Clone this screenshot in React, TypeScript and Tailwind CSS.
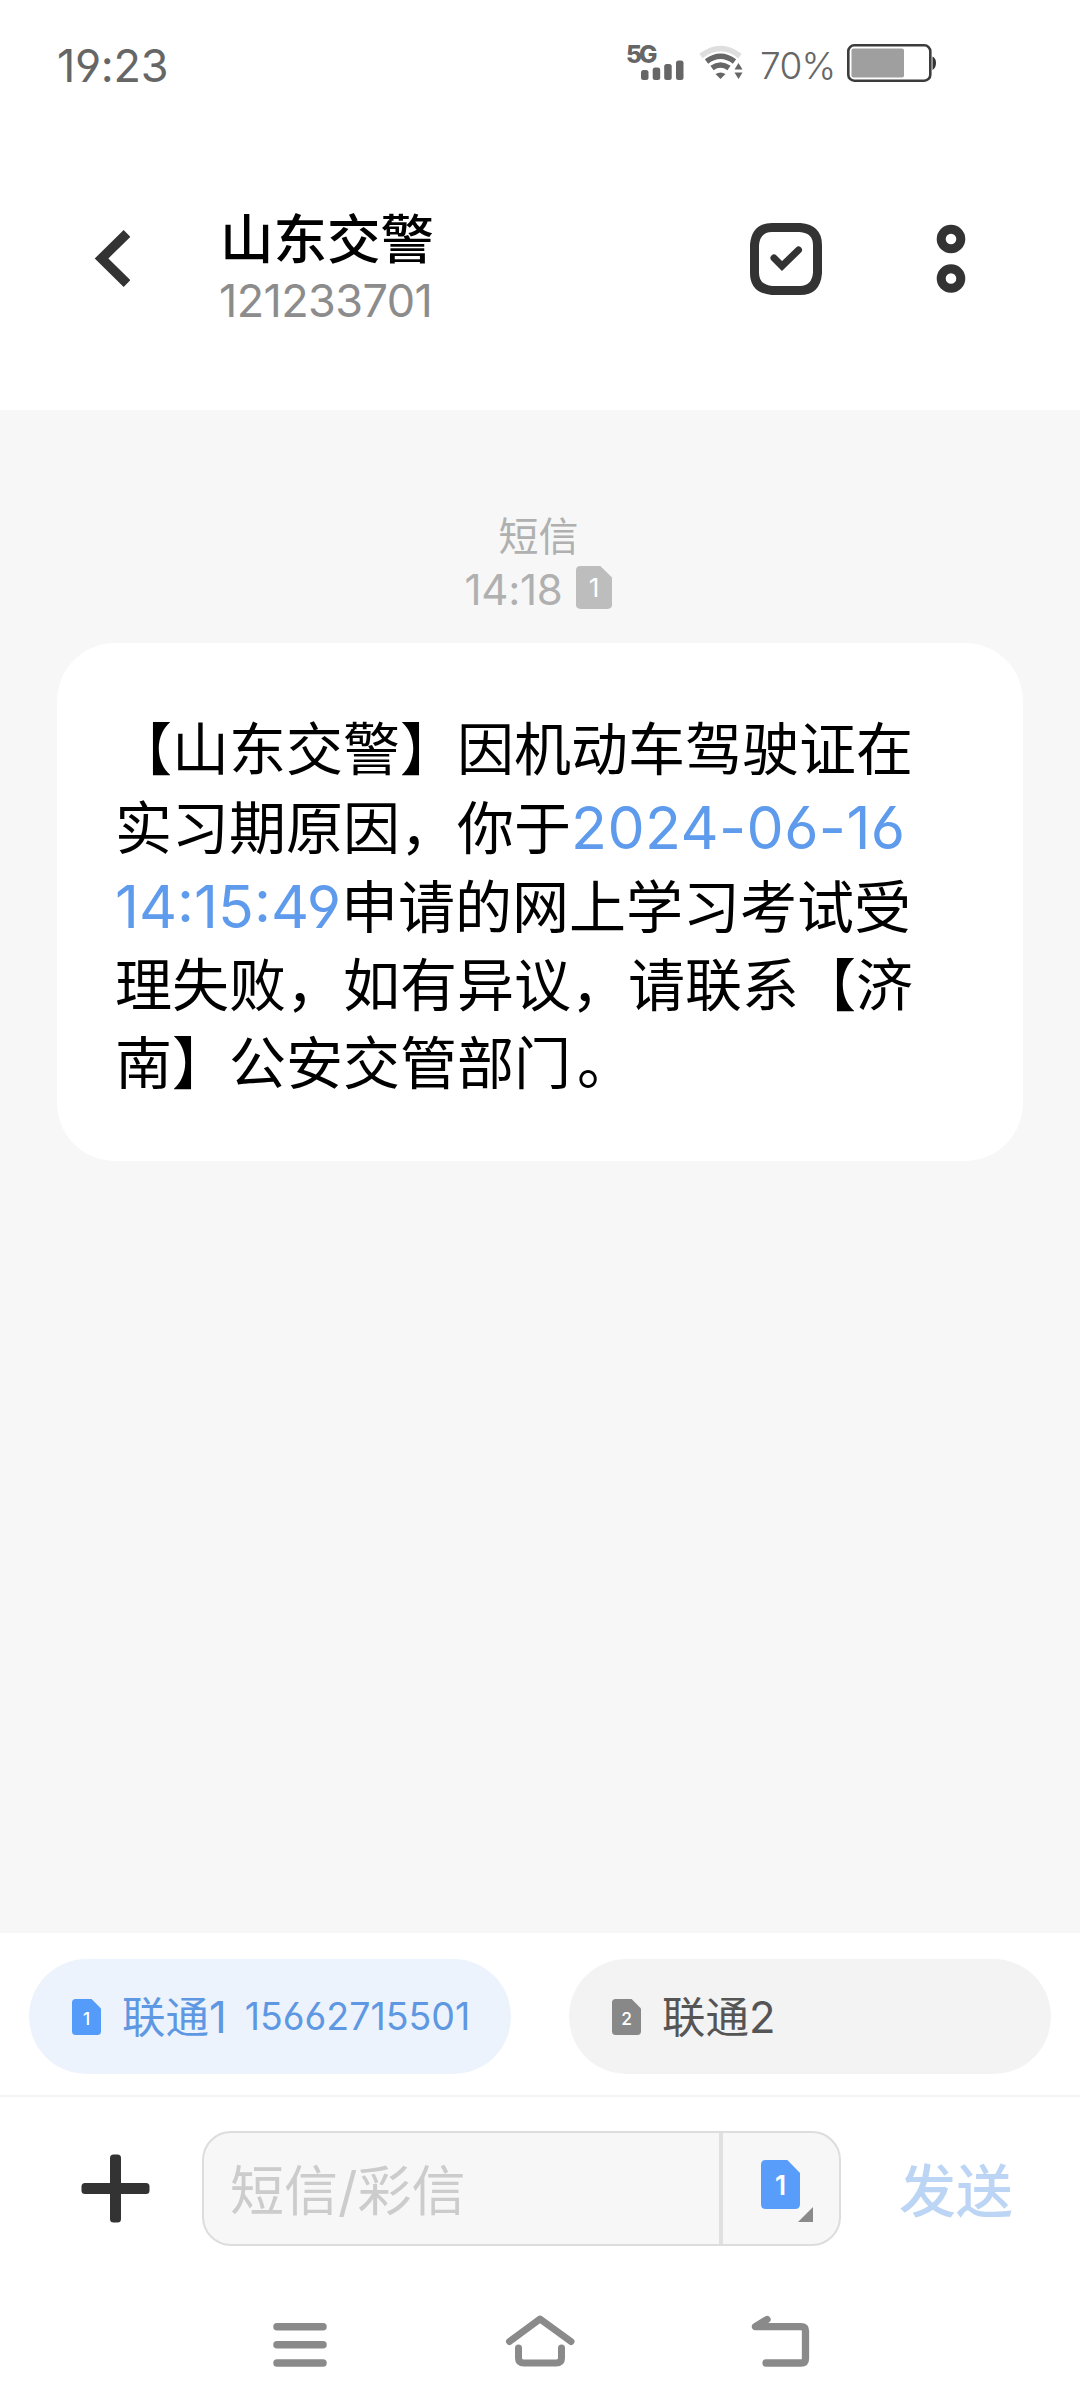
import * as React from 'react';

const PHONE = '15662715501';

function SimIcon({ slot, className, digitClass }: { slot: number; className: string; digitClass: string }) {
  return (
    <svg viewBox="0 0 40 49" preserveAspectRatio="none" className={className}>
      <path d="M5 0H27L40 13V44Q40 49 35 49H5Q0 49 0 44V5Q0 0 5 0Z" fill="currentColor" />
      <text x="20" y="35" textAnchor="middle" className={digitClass}>
        {slot}
      </text>
    </svg>
  );
}

function StatusBar() {
  return (
    <div className="flex h-[130px] items-start pl-[57px] pr-[143px] text-[#666]">
      <span className="mt-[40px] text-[45px] leading-[52px] tracking-[-0.3px]">19:23</span>
      <div className="mt-[44px] ml-auto flex items-start">
        <div className="relative h-[36px] w-[57px]">
          <span className="absolute -top-[2px] -left-[1px] text-[24.500px] leading-[24px] font-extrabold tracking-[-3px]">5G</span>
          <svg viewBox="0 0 57 36" className="h-[36px] w-[57px]" fill="currentColor">
            <rect x="14" y="26" width="7.5" height="10" rx="2.5" />
            <rect x="25.7" y="23.5" width="7.5" height="12.5" rx="2.5" />
            <rect x="37.2" y="20" width="7.5" height="16" rx="2.5" />
            <rect x="49" y="16.5" width="7.5" height="19.5" rx="2.5" />
          </svg>
        </div>
        <svg viewBox="0 0 44 34" className="mt-[1px] ml-[15px] h-[34px] w-[44px]" fill="none" strokeWidth="5.5">
          <path d="M2 11Q21.500 -4 41 11" stroke="#dedede" />
          <path d="M7.500 16.500Q21.500 6 35.500 16.500" stroke="#666" />
          <path d="M13 23Q21.500 17 30 23" stroke="#666" />
          <path d="M16.500 29Q21.500 26 26.500 29L21.500 34Z" fill="#666" />
          <path d="M39.500 18L43.500 24.500H35.500ZM39.500 34L43.500 27.500H35.500Z" fill="#666" />
        </svg>
        <span className="mt-[-1px] ml-[17px] w-[78px] text-[37px] leading-[46px] font-light tracking-[-0.7px] whitespace-nowrap">70%</span>
        <svg viewBox="0 0 90 38" className="ml-[9px] h-[38px] w-[90px]">
          <rect x="1.300" y="1.300" width="82" height="35.400" rx="6" fill="none" stroke="#3c3c3c" strokeWidth="2.600" />
          <rect x="4.500" y="4.500" width="52.500" height="29" rx="2" fill="#9f9f9f" />
          <path d="M85.500 12.500Q89 14 89 19T85.500 26Z" fill="#333" />
        </svg>
      </div>
    </div>
  );
}

function Header() {
  return (
    <header className="flex h-[280px] items-start pt-[75px] text-[#333]">
      <button className="mt-[24px] ml-[94px]">
        <svg viewBox="0 0 36 60" className="h-[60px] w-[36px]" fill="none" stroke="currentColor" strokeWidth="9.5">
          <path d="M33 4.500L7.500 29.500L33 54.500" />
        </svg>
      </button>
      <div className="ml-[90px] flex flex-col">
        <h1 className="pt-[2px] text-[53.500px] leading-[66px] font-medium text-black">山东交警</h1>
        <span className="mt-[2px] -ml-[1px] text-[45px] leading-[52px] tracking-[-0.600px] text-[#8c8c8c]">121233701</span>
      </div>
      <div className="mt-[18px] mr-[114px] ml-auto flex items-center">
        <svg viewBox="0 0 72 72" className="h-[72px] w-[72px]" fill="none" stroke="currentColor">
          <path
            d="M22 4.500H50Q67.500 6 67.500 22V50Q66 67.500 50 67.500H22Q4.500 66 4.500 50V22Q6 4.500 22 4.500Z"
            strokeWidth="9"
          />
          <path d="M24 35L32 43L48.500 27" strokeWidth="7" strokeLinecap="round" />
        </svg>
        <svg viewBox="0 0 30 72" className="ml-[114px] h-[72px] w-[30px]" fill="none" stroke="currentColor" strokeWidth="9">
          <circle cx="15" cy="16" r="9.800" />
          <circle cx="15" cy="55.500" r="9.800" />
        </svg>
      </div>
    </header>
  );
}

function Conversation() {
  return (
    <main className="flex h-[1523px] flex-col bg-[#f7f7f7] px-[57px] pt-[100px]">
      <div className="flex flex-col items-center pr-[3px] text-[#b0b0b0]">
        <span className="text-[40px] leading-[54px]">短信</span>
        <div className="flex h-[52px] items-start">
          <span className="text-[42px] leading-[52px] tracking-[-0.300px]">14:18</span>
          <SimIcon slot={1} className="mt-[2px] ml-[14px] h-[43px] w-[36px] text-[#bdbdbd]" digitClass="fill-white text-[29px]" />
        </div>
      </div>
      <div className="mt-[27px] h-[518px] rounded-[58px] bg-white px-[58px] pt-[68px]">
        <p className="text-[57px] leading-[78px] whitespace-nowrap text-black">
          【山东交警】因机动车驾驶证在
          <br />
          实习期原因，你于<span className="text-[59px] tracking-[0.400px] text-[#5f9bec]">2024-06-16</span>
          <br />
          <span className="text-[59px] text-[#5f9bec]">14:15:49</span>申请的网上学习考试受
          <br />
          理失败，如有异议，请联系【济
          <br />
          南】公安交管部门<span className="ml-[6px]">。</span>
        </p>
      </div>
    </main>
  );
}

function SimPicker() {
  return (
    <div className="flex h-[164px] items-start gap-[58px] border-b-2 border-[#f4f4f4] px-[29px] pt-[26px]">
      <button className="flex h-[115px] flex-1 items-center rounded-full bg-[#edf3fc] pl-[43px] text-[#5f98e2]">
        <SimIcon slot={1} className="h-[36px] w-[29px] text-[#559bfa]" digitClass="fill-white text-[24px] font-medium" />
        <span className="ml-[21px] text-[43.500px] leading-[60px]">联通1</span>
        <span className="ml-[18px] text-[37.500px] leading-[60px] tracking-[0px]">{PHONE}</span>
      </button>
      <button className="flex h-[115px] flex-1 items-center rounded-full bg-[#f3f3f3] pl-[43px] text-[#555]">
        <SimIcon slot={2} className="h-[36px] w-[29px] text-[#888]" digitClass="fill-white text-[24px] font-medium" />
        <span className="ml-[21px] text-[43.500px] leading-[60px]">联通2</span>
      </button>
    </div>
  );
}

function Composer() {
  return (
    <div className="flex h-[183px] items-start pt-[34px]">
      <button className="mt-[23px] ml-[81px]">
        <svg viewBox="0 0 69 69" className="h-[69px] w-[69px]" fill="#333">
          <rect x="29" y="0.500" width="11" height="68" rx="3.500" />
          <rect x="0.500" y="29" width="68" height="11" rx="3.500" />
        </svg>
      </button>
      <div className="ml-[52px] flex h-[115px] w-[639px] rounded-[29px] border-2 border-[#ddd] bg-[#f7f7f7]">
        <div className="flex-1 pt-[19px] pl-[26px] text-[54px] leading-[80px] whitespace-nowrap text-[#ccc]">短信/彩信</div>
        <div className="relative w-[120px] border-l-4 border-[#e0e0e0] pt-[27px] pl-[38px]">
          <SimIcon slot={1} className="h-[49px] w-[39px] text-[#599dfa]" digitClass="fill-white text-[27px] font-semibold" />
          <svg viewBox="0 0 15 15" className="absolute top-[74px] left-[75px] h-[15px] w-[15px]">
            <path d="M15 0V15H0Z" fill="#8a8a8a" />
          </svg>
        </div>
      </div>
      <button className="mt-[21px] ml-[58px] text-[57px] leading-[80px] font-medium text-[#bcd5f4]">发送</button>
    </div>
  );
}

function NavBar() {
  return (
    <nav className="flex h-[128px] items-start pt-[34px]">
      <svg viewBox="0 0 56 64" className="ml-[272px] h-[64px] w-[56px]" stroke="#8a8a8a" strokeWidth="7.500" strokeLinecap="round">
        <path d="M5 12.700H51M5 30.700H51M5 49H51" />
      </svg>
      <svg viewBox="0 0 72 64" className="ml-[176px] h-[64px] w-[72px]" fill="none" stroke="#8a8a8a" strokeWidth="7" strokeLinecap="round" strokeLinejoin="round">
        <path d="M5.500 27.500L36 5L67 27.500" />
        <path d="M14.500 34V44Q14.500 49 20 49H52Q57.500 49 57.500 44V34" />
      </svg>
      <svg viewBox="0 0 60 64" className="ml-[174px] h-[64px] w-[60px]" fill="none" stroke="#8a8a8a" strokeWidth="7.300" strokeLinecap="round" strokeLinejoin="round">
        <path d="M17 5.500L5.500 12.700H51Q55.500 12.700 55.500 17V44.500Q55.500 49 51 49H16" />
      </svg>
    </nav>
  );
}

export default function App() {
  return (
    <div className="flex h-[2408px] w-[1080px] flex-col overflow-hidden bg-white font-['Inter','Noto_Sans_CJK_SC',sans-serif] [font-feature-settings:'cv03','cv04']">
      <StatusBar />
      <Header />
      <Conversation />
      <SimPicker />
      <Composer />
      <NavBar />
    </div>
  );
}
